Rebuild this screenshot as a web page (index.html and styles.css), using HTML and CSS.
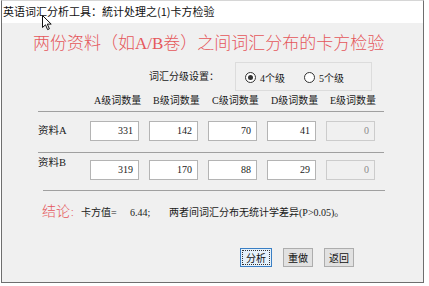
FILE: index.html
```html
<!DOCTYPE html>
<html lang="zh-CN">
<head>
<meta charset="utf-8">
<link rel="stylesheet" href="styles.css">
</head>
<body>
<div class="window">
  <div class="titlebar">英语词汇分析工具：統计处理之(1)卡方检验</div>
  <div class="client">
    <div class="heading">两份资料（如A/B卷）之间词汇分布的卡方检验</div>
    <div class="settings">
      <span class="set-label">词汇分级设置：</span>
      <div class="groupbox">
        <span class="radio"><span class="circle checked"></span>4个级</span>
        <span class="radio"><span class="circle"></span>5个级</span>
      </div>
    </div>
    <div class="grid header">
      <span></span>
      <span class="col">A级词数量</span>
      <span class="col">B级词数量</span>
      <span class="col">C级词数量</span>
      <span class="col">D级词数量</span>
      <span class="col">E级词数量</span>
    </div>
    <div class="rule rule-1"></div>
    <div class="grid data row-a">
      <span class="row-label">资料A</span>
      <span class="box">331</span>
      <span class="box">142</span>
      <span class="box">70</span>
      <span class="box">41</span>
      <span class="box disabled">0</span>
    </div>
    <div class="rule rule-2"></div>
    <div class="grid data row-b">
      <span class="row-label raised">资料B</span>
      <span class="box">319</span>
      <span class="box">170</span>
      <span class="box">88</span>
      <span class="box">29</span>
      <span class="box disabled">0</span>
    </div>
    <div class="rule rule-3"></div>
    <div class="result">
      <span class="res-title">结论<span class="res-colon">：</span></span>
      <span class="res-key">卡方值=</span>
      <span class="res-val">6.44;</span>
      <span class="res-text">两者间词汇分布无统计学差异(P&gt;0.05)。</span>
    </div>
    <div class="buttons">
      <button class="btn focused"><span class="focus-ring">分析</span></button>
      <button class="btn">重做</button>
      <button class="btn">返回</button>
    </div>
  </div>
  <svg class="cursor" width="12" height="16" viewBox="0 0 12 16">
    <path d="M0.5 0.5 L0.5 12.5 L3.5 9.8 L5.6 14.6 L7.4 13.8 L5.3 9.1 L9.2 9.1 Z" fill="#fff" stroke="#111" stroke-width="1" stroke-linejoin="miter"/>
  </svg>
</div>
</body>
</html>
```

FILE: styles.css
```css
* { box-sizing: border-box; }
html, body {
  margin: 0;
  padding: 0;
  background: #ffffff;
  width: 429px;
  height: 286px;
  overflow: hidden;
}
body {
  font-family: "Liberation Serif", "Noto Sans CJK SC", serif;
  font-size: 10px;
  color: #1a1a1a;
}
.window {
  position: relative;
  margin-left: 1px;
  width: 423px;
  height: 283px;
  border-left: 1px solid #6e6e6e;
  border-right: 1px solid #6e6e6e;
  border-bottom: 1px solid #6e6e6e;
  border-top: 1px solid #d6d6d6;
  display: flex;
  flex-direction: column;
}
.titlebar {
  height: 22px;
  background: #ffffff;
  font-family: "Noto Sans CJK SC", sans-serif;
  font-size: 11px;
  line-height: 20px;
  padding-left: 1px;
  color: #111;
  white-space: nowrap;
}
.client {
  flex: 1;
  background: #f0f0f0;
  display: flex;
  flex-direction: column;
}
.heading {
  margin-top: 11px;
  padding-left: 31px;
  font-size: 17px;
  font-weight: 300;
  line-height: 20px;
  color: #e5575b;
  white-space: nowrap;
}
.settings {
  margin-top: 8px;
  display: flex;
  align-items: center;
  padding-left: 147px;
}
.set-label {
  width: 86px;
  line-height: 14px;
}
.groupbox {
  width: 137px;
  height: 29px;
  border: 1px solid #dcdcdc;
  display: flex;
  align-items: center;
  padding-left: 9px;
  gap: 19px;
  padding-top: 2px;
}
.radio {
  display: flex;
  align-items: center;
  gap: 4px;
}
.circle {
  width: 11px;
  height: 11px;
  border-radius: 50%;
  border: 1px solid #333;
  background: #fff;
  position: relative;
}
.circle.checked::after {
  content: "";
  position: absolute;
  left: 2px;
  top: 2px;
  width: 5px;
  height: 5px;
  border-radius: 50%;
  background: #333;
}
.grid {
  display: grid;
  grid-template-columns: 42px repeat(5, 49px);
  column-gap: 10px;
  padding-left: 36px;
}
.header {
  margin-top: 3px;
  line-height: 14px;
}
.col {
  text-align: center;
  padding-left: 4px;
  white-space: nowrap;
}
.rule {
  margin-left: 36px;
  width: 346px;
  height: 1px;
  background: #a0a0a0;
}
.rule-1 { margin-top: 3px; }
.rule-2 { margin-top: 11px; }
.rule-3 { margin-top: 10px; margin-left: 41px; width: 342px; }
.row-a { margin-top: 9px; }
.row-b { margin-top: 7px; }
.data { align-items: center; }
.row-label {
  line-height: 14px;
  font-size: 10.5px;
}
.row-label.raised {
  align-self: start;
  margin-top: -4px;
}
.box {
  height: 20px;
  background: #ffffff;
  border: 1px solid #b4b4b4;
  text-align: right;
  line-height: 18px;
  padding-right: 5px;
}
.box.disabled {
  background: #f0f0f0;
  border-color: #cccccc;
  color: #8a8a8a;
}
.result {
  margin-top: 12px;
  padding-left: 40px;
  display: flex;
  align-items: baseline;
  line-height: 18px;
  white-space: nowrap;
}
.res-title {
  color: #e5575b;
  font-size: 14px;
  font-weight: 300;
  width: 39px;
}
.res-colon {
  font-size: 9px;
}
.res-key { width: 49px; }
.res-val { width: 39px; }
.buttons {
  margin-top: 26px;
  display: flex;
  justify-content: flex-end;
  gap: 11px;
  padding-right: 69px;
}
.btn {
  width: 30px;
  height: 19px;
  padding: 0;
  margin: 0;
  background: #e1e1e1;
  border: 1px solid #adadad;
  font-family: "Noto Sans CJK SC", sans-serif;
  font-size: 10px;
  line-height: 16px;
  color: #111;
}
.btn.focused {
  width: 32px;
  border-color: #3a7fc4;
  background: #e5f1fb;
  padding: 1px;
}
.focus-ring {
  display: block;
  height: 100%;
  border: 1px dotted #333;
  line-height: 13px;
}
.cursor {
  position: absolute;
  left: 40px;
  top: 14px;
}
```
